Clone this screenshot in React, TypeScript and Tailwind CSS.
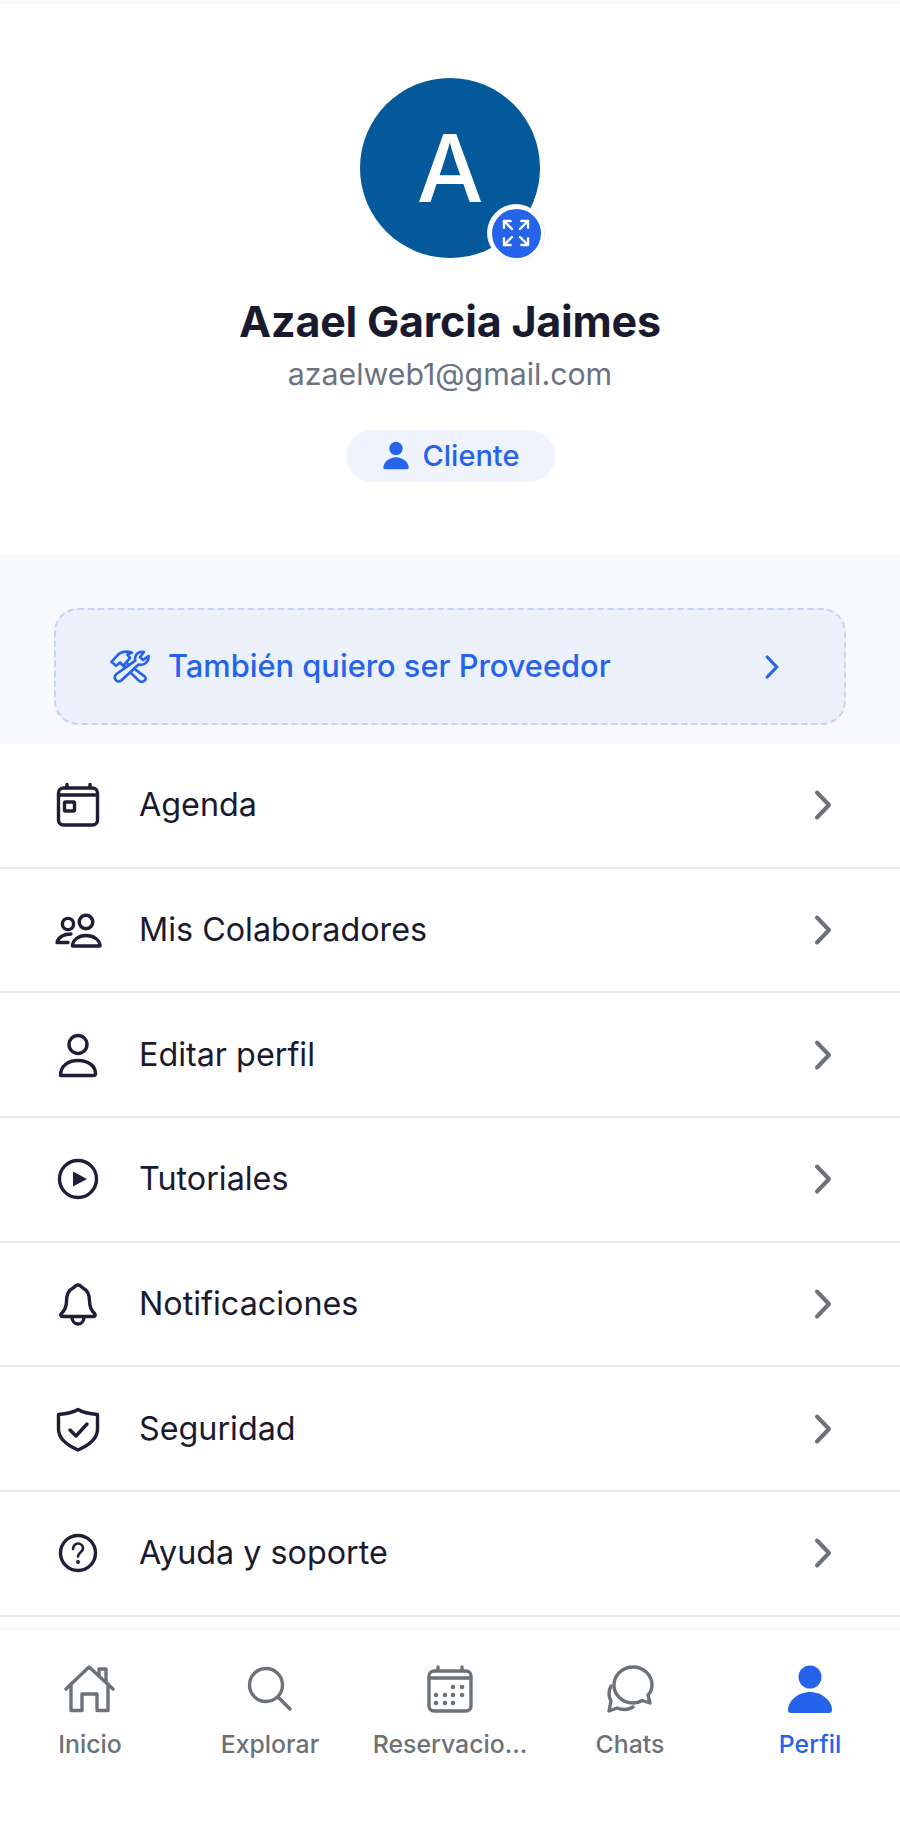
import { Expand } from 'lucide-react';
import type { ReactNode } from 'react';

const ink = '#1e1f36';
const navGray = '#6b7278';

const Line = ({ children, color = ink, width = 3.4, box = 48, className = '' }: { children: ReactNode; color?: string; width?: number; box?: number; className?: string }) => (
  <svg viewBox={`0 0 ${box} ${box}`} fill="none" stroke={color} strokeWidth={width} strokeLinecap="round" strokeLinejoin="round" className={className}>
    {children}
  </svg>
);

const PersonFill = ({ className }: { className: string }) => (
  <svg viewBox="0 0 52 52" fill="#2563eb" className={className}>
    <circle cx="26" cy="13" r="11.5" />
    <path d="M4 46c0-9 10-18 22-18s22 9 22 18c0 2-1 3-3 3H7c-2 0-3-1-3-3z" />
  </svg>
);

const Chevron = ({ color, className }: { color: string; className: string }) => (
  <svg viewBox="0 0 40 40" fill="none" stroke={color} strokeWidth="4" strokeLinecap="round" strokeLinejoin="round" className={className}>
    <path d="M14 7.5 26 20 14 32.5" />
  </svg>
);

const menu: { label: string; icon: ReactNode }[] = [
  {
    label: 'Agenda',
    icon: (
      <>
        <rect x="4.5" y="7" width="39" height="37" rx="5" />
        <path d="M4.5 14h39M13 3.5V6M36 3.5V6" />
        <rect x="10.5" y="21" width="10" height="9" rx="1" />
      </>
    ),
  },
  {
    label: 'Mis Colaboradores',
    icon: (
      <>
        <circle cx="32" cy="16" r="6.8" />
        <circle cx="14" cy="18" r="5.6" />
        <path d="M18.5 40c0-6 6-10.500 13.500-10.500S46 34 46 40z" />
        <path d="M17 28c-7 0-13 3-14 8.500h11" />
      </>
    ),
  },
  {
    label: 'Editar perfil',
    icon: (
      <>
        <circle cx="24" cy="13.500" r="9" />
        <path d="M6.500 44.500c0-10 8-15 17.500-15s17.500 5 17.500 13c0 1.500-.5 2-2 2z" />
      </>
    ),
  },
  {
    label: 'Tutoriales',
    icon: (
      <>
        <circle cx="24" cy="24" r="18.500" />
        <path d="M19 16.500 33 24l-14 7.500z" fill={ink} stroke="none" />
      </>
    ),
  },
  {
    label: 'Notificaciones',
    icon: (
      <>
        <path d="M24 5c-2.500 0-3.500 2-5 3-5 2.500-6.500 7.500-6.500 13 0 5-1.500 9-5 12.500-1.500 1.500-.5 3 1 3h31c1.500 0 2.500-1.500 1-3-3.500-3.500-5-7.500-5-12.500 0-5.500-1.500-10.500-6.500-13-1.500-1-2.500-3-5-3z" />
        <path d="M18 37c0 4 2.500 7 6 7s6-3 6-7" />
      </>
    ),
  },
  {
    label: 'Seguridad',
    icon: (
      <>
        <path d="M24 4.500C19 7.500 11 9 4.500 9.500V24c0 9 8 16 19.500 21 11.500-5 19.500-12 19.500-21V9.500C37 9 29 7.500 24 4.500z" />
        <path d="M16 25l6 6 11-12" />
      </>
    ),
  },
  {
    label: 'Ayuda y soporte',
    icon: (
      <>
        <circle cx="24" cy="24" r="17.500" />
        <path d="M19 20c0-3 2.300-5.500 5-5.500s5 2 5 4.800c0 4-5 4.400-5 8.200" strokeWidth="2.600" />
        <circle cx="24" cy="33" r="1" fill={ink} strokeWidth="2" />
      </>
    ),
  },
];

const nav: { label: string; active?: boolean; icon: ReactNode }[] = [
  {
    label: 'Inicio',
    icon: (
      <Line color={navGray} box={52} className="w-[52px] h-[52px]">
        <path d="M2 25 25 3l24 22" />
        <path d="M7 20v26.500h11V30h15v16.500h11V20" />
        <path d="M35 11V5h7v13" />
      </Line>
    ),
  },
  {
    label: 'Explorar',
    icon: (
      <Line color={navGray} box={52} className="w-[52px] h-[52px]">
        <circle cx="22" cy="21" r="16.500" />
        <path d="M34 33l12 12" />
      </Line>
    ),
  },
  {
    label: 'Reservacio...',
    icon: (
      <Line color={navGray} box={52} className="w-[52px] h-[52px]">
        <rect x="5" y="7" width="42" height="40" rx="5" />
        <path d="M5 14h42M14 3v3M38 3v3" />
        <g fill={navGray} stroke="none">
          <circle cx="29" cy="23" r="2.300" />
          <circle cx="38" cy="23" r="2.300" />
          <circle cx="12" cy="31" r="2.300" />
          <circle cx="21" cy="31" r="2.300" />
          <circle cx="29" cy="31" r="2.300" />
          <circle cx="38" cy="31" r="2.300" />
          <circle cx="12" cy="39" r="2.300" />
          <circle cx="21" cy="39" r="2.300" />
          <circle cx="29" cy="39" r="2.300" />
        </g>
      </Line>
    ),
  },
  {
    label: 'Chats',
    icon: (
      <Line color={navGray} box={52} className="w-[52px] h-[52px]">
        <path d="M29 3C18.500 3 10 11 10 21s8.500 18 19 18c3.500 0 6.500-.8 9-2.500l8 2.500-2-8c3-3 4-6 4-10C48 11 39.500 3 29 3z" />
        <path d="M7 22c-2.500 5-2.500 10.500 0 15L5 47l8-3c5 2 11 2 16-1" />
      </Line>
    ),
  },
  {
    label: 'Perfil',
    active: true,
    icon: <PersonFill className="w-[52px] h-[52px]" />,
  },
];

export default function App() {
  return (
    <div className="w-[900px] h-[1825px] bg-white flex flex-col overflow-hidden font-['Inter',sans-serif]">
      {/* Header */}
      <div className="h-[555px] shrink-0 flex flex-col items-center pt-[74px] border-t-4 border-[#f8fafc]">
        <div className="relative w-[180px] h-[180px] rounded-full bg-[#04599b] flex items-center justify-center">
          <span className="text-white text-[94px] font-medium leading-none">A</span>
          <div className="absolute right-[-5px] bottom-[-4px] w-[58px] h-[58px] rounded-full bg-white border border-[#e8eefb] flex items-center justify-center">
            <div className="w-[49px] h-[49px] rounded-full bg-[#2563eb] flex items-center justify-center">
              <Expand size={32} color="#ffffff" strokeWidth={1.8} />
            </div>
          </div>
        </div>
        <h1 className="mt-[37px] text-[43px] leading-[52px] font-bold text-[#1a1a2e] tracking-[-0.2px]">Azael Garcia Jaimes</h1>
        <p className="mt-[7px] text-[30.3px] leading-[40px] text-[#6b7280]">azaelweb1@gmail.com</p>
        <div className="mt-[36px] w-[209px] h-[52px] rounded-full bg-[#eef3fd] flex items-center justify-center gap-[12px]">
          <PersonFill className="w-[30px] h-[30px]" />
          <span className="text-[29px] font-medium text-[#2563eb]">Cliente</span>
        </div>
      </div>

      {/* Provider banner */}
      <div className="h-[189px] shrink-0 bg-[#f8fafd] px-[54px] pt-[53px]">
        <div className="h-[117px] rounded-[24px] border-2 border-dashed border-[#c3d3f6] bg-[#ebf0fb] flex items-center pl-[54px] pr-[53px]">
          <svg viewBox="0 0 120 100" fill="none" stroke="#2563eb" strokeWidth="8" strokeLinecap="round" strokeLinejoin="round" className="w-[40px] h-[33px] shrink-0 mr-[2px]">
            <path d="M48 38 104 80q8 8-2 14-8 6-16-2L36 44" />
            <path d="M4 36 22 16C32 6 48 2 66 8L52 14l8 10-20 24-10-10-12 10z" />
            <path d="M102 6C86 2 72 16 76 32L20 72Q8 82 18 92q8 8 18-2L86 44c16 4 32-8 30-26L100 30 90 22z" fill="#ebf0fb" />
          </svg>
          <span className="ml-[16px] text-[30.8px] font-medium text-[#2563eb]">También quiero ser Proveedor</span>
          <Chevron color="#2563eb" className="ml-auto w-[32px] h-[32px] -translate-x-[3px]" />
        </div>
      </div>

      {/* Menu */}
      {menu.map((item) => (
        <div key={item.label} className="h-[124.7px] shrink-0 border-b-2 border-[#e5e8f1] flex items-center pl-[54px] pr-[57px]">
          <Line className="w-[48px] h-[48px] shrink-0">{item.icon}</Line>
          <span className="ml-[37px] text-[32.3px] text-[#1a1a2e]">{item.label}</span>
          <Chevron color={navGray} className="ml-auto w-[40px] h-[40px]" />
        </div>
      ))}

      <div className="flex-1" />

      {/* Bottom navigation */}
      <div className="h-[197px] shrink-0 border-t border-[#eef0f5] grid grid-cols-5 pt-[35px]">
        {nav.map((tab) => (
          <div key={tab.label} className="flex flex-col items-center">
            {tab.icon}
            <span className={`mt-[10px] text-[24.8px] font-medium leading-[36px] whitespace-nowrap ${tab.active ? 'text-[#2563eb]' : 'text-[#6b7278]'}`}>{tab.label}</span>
          </div>
        ))}
      </div>
    </div>
  );
}
